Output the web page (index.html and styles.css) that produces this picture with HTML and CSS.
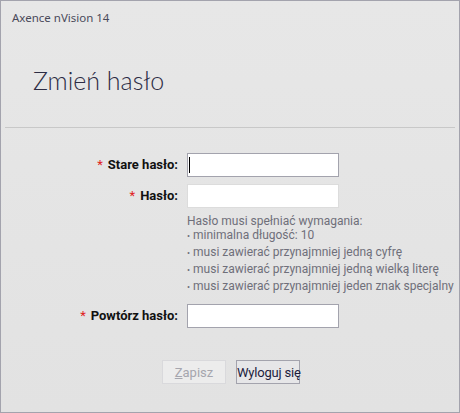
FILE: index.html
```html
<!DOCTYPE html>
<html lang="pl">
<head>
<meta charset="utf-8">
<title>Axence nVision 14</title>
<link rel="stylesheet" href="styles.css">
</head>
<body>
<div class="window">
  <div class="app-title">Axence nVision 14</div>
  <h1 class="page-title">Zmień hasło</h1>
  <div class="separator"></div>
  <form class="form">
    <label class="label"><span class="req">*</span>Stare hasło:</label>
    <span class="field-wrap"><input class="field field-dark" type="password"><span class="caret"></span></span>

    <label class="label"><span class="req">*</span>Hasło:</label>
    <input class="field field-light" type="password">

    <div class="hint">
      <div class="hint-head">Hasło musi spełniać wymagania:</div>
      <ul class="hint-list">
        <li>minimalna długość: 10</li>
        <li>musi zawierać przynajmniej jedną cyfrę</li>
        <li>musi zawierać przynajmniej jedną wielką literę</li>
        <li>musi zawierać przynajmniej jeden znak specjalny</li>
      </ul>
    </div>

    <label class="label"><span class="req">*</span>Powtórz hasło:</label>
    <input class="field field-dark" type="password">
  </form>
  <div class="buttons">
    <button class="btn btn-disabled" type="button" disabled><u>Z</u>apisz</button>
    <button class="btn btn-primary" type="button">Wyloguj się</button>
  </div>
</div>
</body>
</html>
```
FILE: styles.css
```css
html, body {
  margin: 0;
  padding: 0;
}
body {
  width: 460px;
  height: 413px;
  overflow: hidden;
  font-family: Roboto, "Liberation Sans", sans-serif;
}
.window {
  box-sizing: border-box;
  width: 460px;
  height: 413px;
  border: 1px solid #a3a3ad;
  background: linear-gradient(#e7e7e7, #e2e2e2);
  display: flex;
  flex-direction: column;
}
.app-title {
  font-family: "Noto Sans", sans-serif;
  font-size: 11.5px;
  line-height: 16px;
  color: #4a4a5a;
  padding: 9px 0 0 11px;
  height: 16px;
}
.page-title {
  margin: 0;
  padding: 39px 0 0 32px;
  font-family: Lato, sans-serif;
  font-weight: 300;
  font-size: 25px;
  line-height: 30px;
  height: 30px;
  color: #2c2c44;
}
.separator {
  margin: 32px 4px 0 4px;
  height: 1px;
  background: #c8c8c8;
}
.form {
  display: grid;
  grid-template-columns: 177px 152px;
  column-gap: 9px;
  row-gap: 7px;
  margin-top: 25px;
  align-items: center;
}
.label {
  justify-self: end;
  font-weight: bold;
  font-size: 13px;
  color: #111;
  line-height: 24px;
}
.req {
  color: #e02020;
  font-weight: normal;
  margin-right: 5px;
}
.field-wrap {
  position: relative;
  display: block;
  height: 24px;
}
.field {
  box-sizing: border-box;
  display: block;
  width: 152px;
  height: 24px;
  margin: 0;
  padding: 0 3px;
  background: #fff;
  outline: none;
  font-size: 13px;
}
.field-dark {
  border: 1px solid #a3a3ad;
}
.field-light {
  border: 1px solid #dcdcdc;
}
.caret {
  position: absolute;
  left: 2px;
  top: 4px;
  width: 1px;
  height: 16px;
  background: #000;
}
.hint {
  grid-column: 2;
  white-space: nowrap;
  font-size: 12px;
  color: #6f6f7a;
  margin-top: -1px;
  margin-bottom: 3px;
}
.hint-head {
  line-height: 14px;
}
.hint-list {
  list-style: none;
  margin: 0;
  padding: 0;
}
.hint-list li {
  line-height: 14px;
  margin-top: 2px;
}
.hint-list li:first-child {
  margin-top: 0;
}
.hint-list li::before {
  content: "\2022";
  margin-right: 3px;
  font-size: 9px;
}
.buttons {
  display: flex;
  gap: 10px;
  margin: 32px 0 0 161px;
}
.btn {
  box-sizing: border-box;
  width: 64px;
  height: 24px;
  padding: 0;
  font-family: Roboto, sans-serif;
  font-size: 13px;
  white-space: nowrap;
  overflow: visible;
}
.btn-disabled {
  background: #ececec;
  border: 1px solid #d9d9dc;
  color: #a6a6ae;
}
.btn-primary {
  background: #e6e6e8;
  border: 1px solid #a3a3ad;
  color: #1c1c3c;
  letter-spacing: -0.2px;
}
```
